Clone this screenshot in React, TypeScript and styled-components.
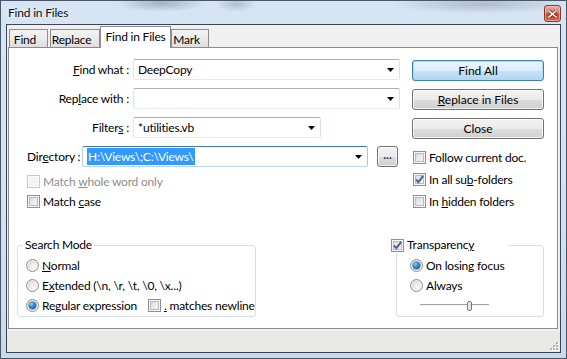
import React from 'react';
import styled, { createGlobalStyle } from 'styled-components';

const GlobalStyle = createGlobalStyle`
  html, body {
    margin: 0;
    padding: 0;
    background: #cfdff0;
  }
  body {
    font-family: "Segoe UI", Lato, "Noto Sans", sans-serif;
    font-size: 12px;
    letter-spacing: -0.2px;
    color: #000;
  }
  * {
    box-sizing: border-box;
  }
`;

const Window = styled.div`
  width: 567px;
  height: 359px;
  border: 1px solid #4a5665;
  background:
    radial-gradient(ellipse 45px 9px at 160px 2px, rgba(70, 80, 92, 0.35), transparent),
    radial-gradient(ellipse 20px 8px at 235px 3px, rgba(70, 80, 92, 0.25), transparent),
    radial-gradient(ellipse 90px 10px at 480px 3px, rgba(70, 80, 92, 0.28), transparent),
    linear-gradient(180deg, #d6e5f5 0%, #d3e3f4 50%, #c8daee 100%);
  display: flex;
  flex-direction: column;
  overflow: hidden;
`;

const TitleBar = styled.div`
  height: 23px;
  flex: none;
  display: flex;
  align-items: center;
  justify-content: space-between;
  padding: 0 5px 0 7px;
`;

const Title = styled.span`
  color: #101010;
  text-shadow: 0 0 6px rgba(255, 255, 255, 0.9);
`;

const CloseButton = styled.div`
  width: 17px;
  height: 17px;
  margin-top: 2px;
  border: 1px solid #7d3a30;
  border-radius: 3px;
  background: linear-gradient(180deg, #eba99b 0%, #dc7c67 45%, #c7452b 55%, #d4664a 100%);
  box-shadow: inset 0 0 0 1px rgba(255, 220, 210, 0.5);
  display: flex;
  align-items: center;
  justify-content: center;
`;

const Client = styled.div`
  flex: 1;
  margin: 0 5px 5px;
  border: 1px solid #3b4450;
  background: #f0f0f0;
  display: flex;
  flex-direction: column;
`;

const TabArea = styled.div`
  flex: 1;
  display: flex;
  flex-direction: column;
  padding: 1px 2px 0 1px;
`;

const TabStrip = styled.div`
  height: 21px;
  flex: none;
  display: flex;
  align-items: flex-end;
  padding-left: 1px;
`;

const Tab = styled.div<{ $w: number; $active?: boolean; $gap?: number }>`
  width: ${p => p.$w}px;
  height: ${p => (p.$active ? 22 : 18)}px;
  margin-right: ${p => p.$gap ?? 0}px;
  margin-bottom: ${p => (p.$active ? -1 : 0)}px;
  position: relative;
  z-index: ${p => (p.$active ? 1 : 0)};
  border: 1px solid #898c95;
  border-bottom: none;
  border-radius: 1px 1px 0 0;
  background: ${p => (p.$active ? '#fff' : 'linear-gradient(180deg, #f3f3f3 0%, #ebebeb 50%, #dedede 100%)')};
  display: flex;
  align-items: ${p => (p.$active ? 'flex-start' : 'center')};
  justify-content: center;
  padding: ${p => (p.$active ? '2px 0 0 0' : '2px 7px 0 0')};
  line-height: 16px;
  white-space: nowrap;
`;

const Panel = styled.div`
  flex: 1;
  background: #fff;
  border: 1px solid #898c95;
  padding: 11px 0 0 8px;
  display: flex;
  flex-direction: column;
`;

const TopSection = styled.div`
  display: flex;
  padding-left: 10px;
`;

const LeftForm = styled.div`
  width: 385px;
  display: flex;
  flex-direction: column;
`;

const FieldRows = styled.div`
  display: flex;
  flex-direction: column;
  gap: 8px;
  margin-bottom: 4px;
`;

const FieldRow = styled.div`
  height: 21px;
  display: flex;
  align-items: center;
`;

const FieldLabel = styled.span<{ $w: number; $align?: string; $gap: number }>`
  width: ${p => p.$w}px;
  flex: none;
  margin-right: ${p => p.$gap}px;
  text-align: ${p => p.$align ?? 'right'};
  white-space: nowrap;
`;

const ComboBox = styled.div<{ $w: number; $focus?: boolean }>`
  width: ${p => p.$w}px;
  height: 21px;
  flex: none;
  display: flex;
  align-items: center;
  background: #fff;
  border: 1px solid;
  border-color: ${p => (p.$focus ? '#3d7bad #a4c9e3 #b7d9ed #b5cfe7' : '#abadb3 #dbdfe6 #e3e9ef #e2e3ea')};
  border-radius: 2px;
  padding-left: 4px;
`;

const ComboText = styled.span`
  flex: 1;
  white-space: nowrap;
  overflow: hidden;
  line-height: 17px;
`;

const Selected = styled.span`
  background: #3399ff;
  color: #fff;
  padding: 0 1px;
  display: inline-block;
`;

const ComboArrow = styled.span`
  width: 17px;
  height: 19px;
  flex: none;
  display: flex;
  align-items: center;
  justify-content: center;
`;

const SmallButton = styled.button`
  width: 21px;
  height: 21px;
  flex: none;
  margin-left: 9px;
  padding: 0 0 4px;
  font: inherit;
  font-weight: bold;
  color: #2a2a7a;
  border: 1px solid #707070;
  border-radius: 3px;
  background: linear-gradient(180deg, #f2f2f2 0%, #ebebeb 50%, #dddddd 51%, #cfcfcf 100%);
  box-shadow: inset 0 0 0 1px rgba(255, 255, 255, 0.75);
  line-height: 10px;
`;

const CheckRow = styled.div<{ $h: number; $pad?: number; $disabled?: boolean }>`
  height: ${p => p.$h}px;
  display: flex;
  align-items: center;
  gap: 3px;
  padding-left: ${p => p.$pad ?? 0}px;
  color: ${p => (p.$disabled ? '#8d8d8d' : '#000')};
  white-space: nowrap;
`;

const CheckBox = styled.span<{ $disabled?: boolean }>`
  width: 13px;
  height: 13px;
  flex: none;
  border: 1px solid ${p => (p.$disabled ? '#c9c9c9' : '#8e8f8f')};
  background: ${p => (p.$disabled ? '#f4f4f4' : 'linear-gradient(135deg, #cfd2d6 0%, #e9eaec 50%, #fbfbfb 100%)')};
  box-shadow: ${p => (p.$disabled ? 'inset 0 0 0 1px #fcfcfc' : 'inset 0 0 0 1px #f6f6f6, inset 0 0 0 2px #b8bcc2')};
  display: flex;
  align-items: center;
  justify-content: center;
`;

const RadioDot = styled.span<{ $checked?: boolean }>`
  width: 13px;
  height: 13px;
  flex: none;
  border-radius: 50%;
  border: 1px solid #8e8f8f;
  background: radial-gradient(circle at 65% 65%, #fdfdfd 0%, #e6e6e6 45%, #c3c6ca 100%);
  box-shadow: inset 0 0 0 1px #f2f2f2;
  display: flex;
  align-items: center;
  justify-content: center;

  &::after {
    content: '';
    display: ${p => (p.$checked ? 'block' : 'none')};
    width: 7px;
    height: 7px;
    border-radius: 50%;
    background: radial-gradient(circle at 35% 30%, #8fd3fb 0%, #2b86cc 45%, #0c4a86 100%);
    box-shadow: 0 0 0 0.5px #1d4f7e;
  }
`;

const RightCol = styled.div`
  width: 132px;
  padding-top: 1px;
  display: flex;
  flex-direction: column;
`;

const ButtonStack = styled.div`
  display: flex;
  flex-direction: column;
  gap: 8px;
  margin-bottom: 7px;
`;

const Button = styled.button<{ $default?: boolean }>`
  width: 132px;
  height: 21px;
  padding: 0 0 1px;
  font: inherit;
  color: #000;
  border: 1px solid ${p => (p.$default ? '#3c7fb1' : '#707070')};
  border-radius: 3px;
  background: ${p =>
    p.$default
      ? 'linear-gradient(180deg, #eaf5fd 0%, #dcedfa 50%, #c6e2f7 51%, #b3d6f1 100%)'
      : 'linear-gradient(180deg, #f2f2f2 0%, #ebebeb 50%, #dddddd 51%, #cfcfcf 100%)'};
  box-shadow: ${p => (p.$default ? 'inset 0 0 0 1px #a7dcf6' : 'inset 0 0 0 1px rgba(255, 255, 255, 0.75)')};
`;

const BottomSection = styled.div`
  display: flex;
  margin-top: 33px;
`;

const GroupBox = styled.div<{ $w: number; $ml?: number }>`
  position: relative;
  width: ${p => p.$w}px;
  height: 72px;
  margin-left: ${p => p.$ml ?? 0}px;
  border: 1px solid #d5dfe5;
  border-radius: 3px;
`;

const Caption = styled.div<{ $left: number; $w?: number }>`
  position: absolute;
  top: -9px;
  left: ${p => p.$left}px;
  width: ${p => (p.$w ? `${p.$w}px` : 'auto')};
  height: 16px;
  line-height: 16px;
  padding: 0 2px;
  background: #fff;
  display: flex;
  align-items: center;
  gap: 3px;
  white-space: nowrap;
`;

const GroupBody = styled.div<{ $pad: number }>`
  padding: 9px 0 0 ${p => p.$pad}px;
  display: flex;
  flex-direction: column;
`;

const RadioRow = styled.div`
  height: 20px;
  display: flex;
  align-items: center;
`;

const RadioItem = styled.label<{ $w?: number }>`
  display: flex;
  align-items: center;
  gap: 3px;
  flex: none;
  width: ${p => (p.$w ? `${p.$w}px` : 'auto')};
  white-space: nowrap;
`;

const Slider = styled.div`
  position: relative;
  width: 69px;
  height: 20px;
  margin-left: 10px;
  display: flex;
  align-items: center;
`;

const SliderTrack = styled.div`
  width: 100%;
  height: 2px;
  border-top: 1px solid #a3a3a3;
  border-bottom: 1px solid #f4f4f4;
  background: #e7eaea;
`;

const SliderThumb = styled.div`
  position: absolute;
  left: 47px;
  top: 6px;
  width: 5px;
  height: 10px;
  border: 1px solid #7a7a7a;
  border-radius: 2px;
  background: linear-gradient(90deg, #f4f4f4, #d9d9d9);
`;

const StatusBar = styled.div`
  height: 23px;
  flex: none;
  background: #ebe9e6;
  border-top: 2px solid #f0f0f0;
  display: flex;
  justify-content: flex-end;
  align-items: flex-end;
  padding: 0 1px 1px 0;
`;

const U = styled.span`
  text-decoration: underline;
`;

const Arrow = () => (
  <svg width="7" height="4" viewBox="0 0 7 4">
    <polygon points="0,0 7,0 3.5,4" fill="#000" />
  </svg>
);

const Tick = () => (
  <svg width="11" height="11" viewBox="0 0 11 11">
    <path d="M2 5.5 L4.3 8.2 L9.2 1.8" fill="none" stroke="#4b5d96" strokeWidth="1.9" />
  </svg>
);

const Check = ({ checked, disabled }: { checked?: boolean; disabled?: boolean }) => (
  <CheckBox $disabled={disabled}>{checked && <Tick />}</CheckBox>
);

const Combo = ({ w, children, focus }: { w: number; children?: React.ReactNode; focus?: boolean }) => (
  <ComboBox $w={w} $focus={focus}>
    <ComboText>{children}</ComboText>
    <ComboArrow>
      <Arrow />
    </ComboArrow>
  </ComboBox>
);

const Gripper = () => (
  <svg width="10" height="10" viewBox="0 0 10 10">
    {[
      [7, 1],
      [4, 4],
      [7, 4],
      [1, 7],
      [4, 7],
      [7, 7],
    ].map(([x, y]) => (
      <g key={`${x}-${y}`}>
        <rect x={x + 1} y={y + 1} width="2" height="2" fill="#fff" />
        <rect x={x} y={y} width="2" height="2" fill="#b5b3ae" />
      </g>
    ))}
  </svg>
);

export default function App() {
  return (
    <>
      <GlobalStyle />
      <Window>
        <TitleBar>
          <Title>Find in Files</Title>
          <CloseButton>
            <svg width="9" height="8" viewBox="0 0 9 8">
              <path d="M1 1 L8 7 M8 1 L1 7" stroke="#5a2118" strokeWidth="3" strokeLinecap="square" />
              <path d="M1 1 L8 7 M8 1 L1 7" stroke="#fff" strokeWidth="1.6" strokeLinecap="square" />
            </svg>
          </CloseButton>
        </TitleBar>
        <Client>
          <TabArea>
            <TabStrip>
              <Tab $w={39} $gap={2}>Find</Tab>
              <Tab $w={50} $gap={0}>Replace</Tab>
              <Tab $w={71} $active>Find in Files</Tab>
              <Tab $w={38}>Mark</Tab>
            </TabStrip>
            <Panel>
              <TopSection>
                <LeftForm>
                  <FieldRows>
                    <FieldRow>
                      <FieldLabel $w={102} $gap={4}>
                        <U>F</U>ind what :
                      </FieldLabel>
                      <Combo w={267}>DeepCopy</Combo>
                    </FieldRow>
                    <FieldRow>
                      <FieldLabel $w={102} $gap={4}>
                        Rep<U>l</U>ace with :
                      </FieldLabel>
                      <Combo w={267} />
                    </FieldRow>
                    <FieldRow>
                      <FieldLabel $w={102} $gap={4}>
                        Filter<U>s</U> :
                      </FieldLabel>
                      <Combo w={188}>*utilities.vb</Combo>
                    </FieldRow>
                    <FieldRow>
                      <FieldLabel $w={50} $gap={5} $align="left">
                        Dir<U>e</U>ctory :
                      </FieldLabel>
                      <Combo w={286} focus>
                        <Selected>H:\Views\;C:\Views\</Selected>
                      </Combo>
                      <SmallButton>...</SmallButton>
                    </FieldRow>
                  </FieldRows>
                  <CheckRow $h={20} $disabled>
                    <Check disabled />
                    <span>
                      Match <U>w</U>hole word only
                    </span>
                  </CheckRow>
                  <CheckRow $h={20}>
                    <Check />
                    <span>
                      Match <U>c</U>ase
                    </span>
                  </CheckRow>
                </LeftForm>
                <RightCol>
                  <ButtonStack>
                    <Button $default>Find All</Button>
                    <Button>
                      <U>R</U>eplace in Files
                    </Button>
                    <Button>Close</Button>
                  </ButtonStack>
                  <CheckRow $h={22} $pad={1}>
                    <Check />
                    <span>Follow current doc.</span>
                  </CheckRow>
                  <CheckRow $h={22} $pad={1}>
                    <Check checked />
                    <span>
                      In all su<U>b</U>-folders
                    </span>
                  </CheckRow>
                  <CheckRow $h={22} $pad={1}>
                    <Check />
                    <span>
                      In <U>h</U>idden folders
                    </span>
                  </CheckRow>
                </RightCol>
              </TopSection>
              <BottomSection>
                <GroupBox $w={239}>
                  <Caption $left={5}>Search Mode</Caption>
                  <GroupBody $pad={8}>
                    <RadioRow>
                      <RadioItem>
                        <RadioDot />
                        <span>
                          <U>N</U>ormal
                        </span>
                      </RadioItem>
                    </RadioRow>
                    <RadioRow>
                      <RadioItem>
                        <RadioDot />
                        <span>
                          E<U>x</U>tended (\n, \r, \t, \0, \x...)
                        </span>
                      </RadioItem>
                    </RadioRow>
                    <RadioRow>
                      <RadioItem $w={122}>
                        <RadioDot $checked />
                        <span>
                          Re<U>g</U>ular expression
                        </span>
                      </RadioItem>
                      <CheckRow $h={20}>
                        <Check />
                        <span>
                          <U>.</U> matches newline
                        </span>
                      </CheckRow>
                    </RadioRow>
                  </GroupBody>
                </GroupBox>
                <GroupBox $w={148} $ml={140}>
                  <Caption $left={-8} $w={119}>
                    <Check checked />
                    <span>
                      Transparenc<U>y</U>
                    </span>
                  </Caption>
                  <GroupBody $pad={13}>
                    <RadioRow>
                      <RadioItem>
                        <RadioDot $checked />
                        <span>On losing focus</span>
                      </RadioItem>
                    </RadioRow>
                    <RadioRow>
                      <RadioItem>
                        <RadioDot />
                        <span>Always</span>
                      </RadioItem>
                    </RadioRow>
                    <RadioRow>
                      <Slider>
                        <SliderTrack />
                        <SliderThumb />
                      </Slider>
                    </RadioRow>
                  </GroupBody>
                </GroupBox>
              </BottomSection>
            </Panel>
          </TabArea>
          <StatusBar>
            <Gripper />
          </StatusBar>
        </Client>
      </Window>
    </>
  );
}
